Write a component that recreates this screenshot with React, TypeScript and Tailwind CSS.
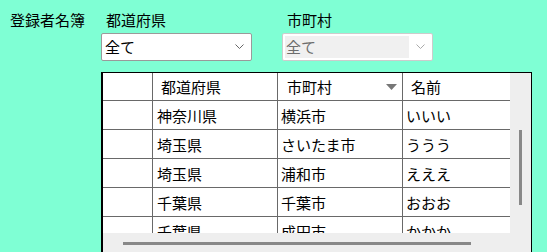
import React from "react";

const font = { fontFamily: '"Noto Sans CJK JP", "Noto Sans", sans-serif' };

const rows = [
  ["神奈川県", "横浜市", "いいい"],
  ["埼玉県", "さいたま市", "ううう"],
  ["埼玉県", "浦和市", "えええ"],
  ["千葉県", "千葉市", "おおお"],
  ["千葉県", "成田市", "かかか"],
];

function Chevron({ color }: { color: string }) {
  return (
    <svg width="10" height="6" viewBox="0 0 10 6" className="shrink-0">
      <polyline points="0.5,0.5 4.5,4.5 8.5,0.5" fill="none" stroke={color} strokeWidth="1" />
    </svg>
  );
}

export default function App() {
  return (
    <div className="w-[547px] h-[252px] overflow-hidden bg-[#7fffd4] text-black text-[15px] leading-none" style={font}>
      <div className="flex">
        <div className="w-[101px] pl-[10px] pt-[12px]">登録者名簿</div>
        <div className="w-[151px] flex flex-col">
          <div className="pl-[5px] pt-[12px] h-[33px]">都道府県</div>
          <div className="h-[28px] border border-[#9a9a9a] rounded-[2px] bg-white flex items-center pl-[3px] pr-[6px] justify-between">
            <span className="pb-[2px]">全て</span>
            <Chevron color="#666" />
          </div>
        </div>
        <div className="w-[151px] ml-[30px] flex flex-col">
          <div className="pl-[5px] pt-[12px] h-[33px]">市町村</div>
          <div className="h-[28px] border border-[#cccccc] rounded-[2px] bg-white flex items-center p-[2px] pr-[6px]">
            <div className="w-[124px] h-[22px] bg-[#f0f0f0] flex items-center pl-[1px] text-[#6d6d6d]">
              <span className="pb-[2px]">全て</span>
            </div>
            <div className="flex-1 flex justify-end">
              <Chevron color="#aaa" />
            </div>
          </div>
        </div>
      </div>

      <div className="ml-[101px] mt-[11px] w-[431px] h-[200px] border-t border-r border-l-2 border-black flex flex-col">
        <div className="flex h-[160px]">
          <div className="w-[407px] overflow-hidden bg-white">
            <div className="w-[425px] flex flex-col">
              <div className="flex h-[28px] border-b border-[#696969]">
                <div className="w-[50px] border-r border-[#696969]" />
                <div className="w-[125px] border-r border-[#696969] flex items-center pl-[8px]">都道府県</div>
                <div className="w-[125px] border-r border-[#696969] flex items-center justify-between pl-[9px] pr-[5px]">
                  <span>市町村</span>
                  <svg width="11" height="6" viewBox="0 0 11 6">
                    <polygon points="0,0 11,0 5.5,6" fill="#777" />
                  </svg>
                </div>
                <div className="w-[125px] border-r border-[#696969] flex items-center pl-[8px]">名前</div>
              </div>
              {rows.map((r, i) => (
                <div key={i} className="flex h-[29px] border-b border-[#696969]">
                  <div className="w-[50px] border-r border-[#696969]" />
                  <div className="w-[125px] border-r border-[#696969] flex items-center pl-[4px]">{r[0]}</div>
                  <div className="w-[125px] border-r border-[#696969] flex items-center pl-[3px]">{r[1]}</div>
                  <div className="w-[125px] border-r border-[#696969] flex items-center pl-[3px]">{r[2]}</div>
                </div>
              ))}
            </div>
          </div>
          <div className="w-[21px] bg-[#eeeeee] pl-[9px] pt-[57px]">
            <div className="w-[3px] h-[75px] bg-[#888888]" />
          </div>
        </div>
        <div className="flex-1 bg-[#eeeeee] pl-[20px] pt-[9px]">
          <div className="w-[348px] h-[3px] bg-[#888888]" />
        </div>
      </div>
    </div>
  );
}
